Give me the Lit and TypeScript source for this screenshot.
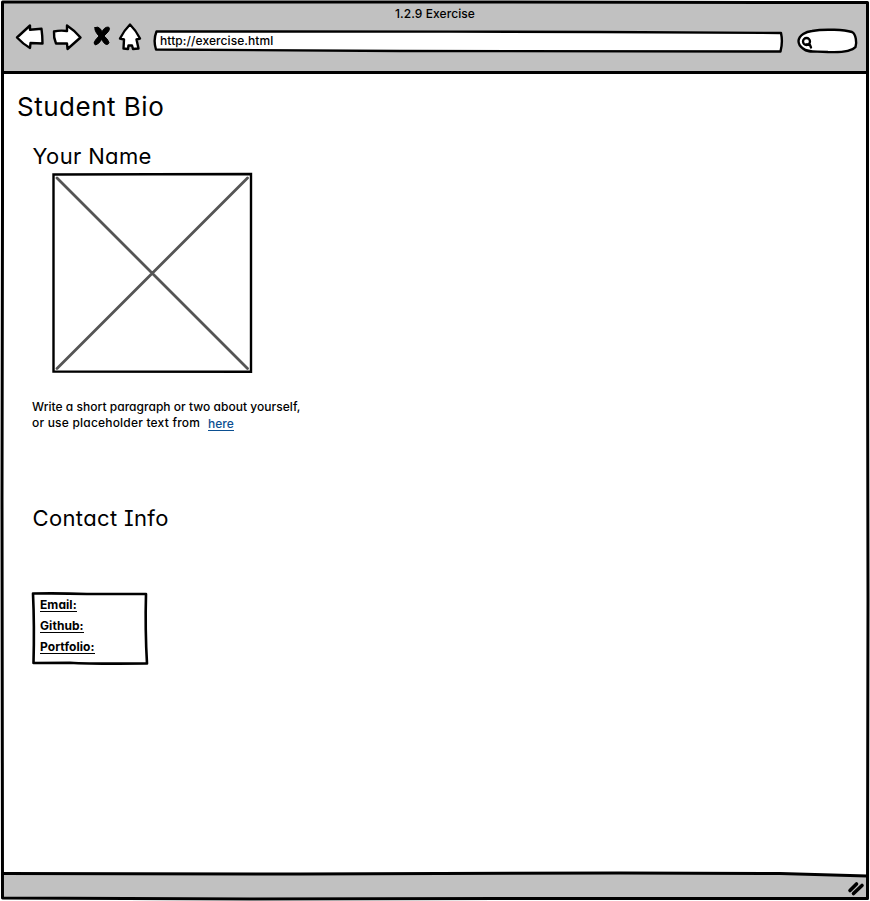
import { LitElement, html, css } from "lit";
import { customElement } from "lit/decorators.js";

@customElement("app-root")
export class AppRoot extends LitElement {
  static styles = css`
    :host {
      display: block;
      width: 870px;
      height: 901px;
      background: #fff;
      color: #000;
      font-family: Inter, Lato, sans-serif;
      font-feature-settings: "cv11";
      overflow: hidden;
    }
    * { box-sizing: border-box; }
    .window { position: relative; display: flex; flex-direction: column; height: 100%; }
    .outline { position: absolute; inset: 0; pointer-events: none; }
    .bar { height: 71px; margin: 2px 3px 0 3px; background: #c1c1c1; flex: none; }
    .title { margin: 0; padding: 4px 0 0 0; text-align: center; font-size: 12px; line-height: 15px; font-weight: 500; letter-spacing: 0.08px; }
    .tools { display: flex; padding-left: 12px; }
    .nav { display: block; width: 130px; height: 32px; }
    .field { position: relative; display: block; width: 630px; height: 24px; margin: 9px 0 0 8px; }
    .shape { position: absolute; inset: 0; }
    .url { position: relative; display: block; padding: 3px 0 0 7px; font-size: 12px; line-height: 15px; font-weight: 500; letter-spacing: 0.08px; }
    .search { display: block; width: 62px; height: 28px; margin: 6px 0 0 14px; }
    main { flex: 1; padding: 18px 0 0 17px; display: flex; flex-direction: column; align-items: flex-start; }
    h1 { margin: 0; font-size: 26px; line-height: 32px; font-weight: 400; letter-spacing: 0.5px; white-space: nowrap; }
    h2 { margin: 0; font-size: 22px; line-height: 28px; font-weight: 400; white-space: nowrap; }
    .name { padding-left: 0.5px; letter-spacing: 0.35px; }
    .info { padding-left: 0.5px; letter-spacing: 0.35px; font-feature-settings: "cv11", "cv08"; }
    section { padding-left: 15px; display: flex; flex-direction: column; align-items: flex-start; }
    .about { padding-top: 19px; }
    .photo { display: block; width: 200px; height: 200px; margin: 3px 0 0 20px; }
    .bio { margin: 26px 0 0; font-size: 12px; line-height: 16px; font-weight: 500; white-space: nowrap; }
    .line { display: flex; }
    .one { letter-spacing: 0.03px; }
    .two { letter-spacing: 0.2px; }
    .link { margin: 1px 0 0 8px; height: 15px; color: #0b4f91; border-bottom: 1px solid #0b4f91; letter-spacing: 0; }
    .contact { padding-top: 73px; }
    .card { position: relative; width: 116px; height: 73px; margin-top: 60px; }
    ul { position: relative; list-style: none; margin: 0; padding: 6px 0 0 8px; font-size: 12px; line-height: 14px; font-weight: 700; letter-spacing: 0.07px; }
    li { height: 21px; }
    .label { display: inline-block; height: 14px; border-bottom: 1px solid #000; }
    footer { height: 28px; margin: 0 3px 3px 3px; background: #c1c1c1; display: flex; justify-content: flex-end; clip-path: polygon(0 3px, 780px 3px, 100% 6px, 100% 100%, 0 100%); }
    .grip { width: 18px; height: 16px; margin: 11px 2px 0 0; }
    svg { overflow: visible; fill: none; stroke: #000; stroke-linecap: round; stroke-linejoin: round; }
  `;

  render() {
    return html`
      <div class="window">
        <header class="bar">
          <p class="title">1.2.9 Exercise</p>
          <div class="tools">
            <svg class="nav" viewBox="15 21 130 32" stroke-width="2.4">
              <g fill="#fff">
                <path d="M17 37.500 L30 25.500 L30 29.800 L41.500 28.800 Q42.500 36 42.500 43.500 L30.500 43 L30 48 Q23 44 17 37.500 Z" />
                <path d="M54 31.500 Q60 30 67 31 L67 25.500 Q74 30 80.500 37.500 L67.500 49 L67 43.500 L56 43.500 Q53.500 38 54 31.500 Z" />
                <path d="M130 24.500 Q136 30.500 140 38.500 L136.500 39.500 L138.500 48.500 L133 49 L132 45.500 L128.500 45.500 L128 49 L123.500 48.500 L124 39.500 L120 38.500 Q124 30.500 130 24.500 Z" />
              </g>
              <path fill="#000" stroke-width="1" d="M95 27.500 Q98 26 100.500 29 L102 32 Q104 27 108.500 27 Q111 29 107 33 L104 36 Q108 39 109 42.500 Q108 46 104.500 43.500 L101.500 39.500 Q99 44 95.500 45 Q92.500 43.500 95.500 40 L99 36 Q94 31 95 27.500 Z" />
            </svg>
            <div class="field">
              <svg class="shape" width="630" height="24" viewBox="153 30 630 24" stroke-width="2.4">
                <path fill="#fff" d="M156.500 31.500 C260 31.500 450 31.500 600 32 C670 32.500 730 33 781 33 Q783 42 780.500 51.500 L400 51 L156 49.500 Q153 40 156.500 31.500 Z" />
              </svg>
              <span class="url">http://exercise.html</span>
            </div>
            <svg class="search" viewBox="797 27 62 28" stroke-width="2.4">
              <path fill="#fff" d="M798.500 41 C799 35 806 31.500 812 31 C825 28.500 845 30 852 32 C856 34 857 43 855.500 47 C852 51 840 52.500 828 52 C815 51 808 53 803 48.500 C799.500 46 798.500 44 798.500 41 Z" />
              <circle cx="806.500" cy="41.500" r="3.500" stroke-width="2.300" />
              <path d="M806.500 44.500 L810 45 L811 47.500" stroke-width="2.300" />
            </svg>
          </div>
        </header>
        <main>
          <h1>Student Bio</h1>
          <section class="about">
            <h2 class="name">Your Name</h2>
            <svg class="photo" viewBox="52 173 200 200">
              <path d="M57 178 L247.500 368.500 M247.500 178 L57 368.500" stroke="#555" stroke-width="2.800" />
              <path d="M53.500 174.500 L251 174 L251 371.700 L53.500 371.500 Z" stroke-width="2.400" stroke-linejoin="miter" />
            </svg>
            <div class="bio">
              <div class="line one">Write a short paragraph or two about yourself,</div>
              <div class="line two">or use placeholder text from<span class="link">here</span></div>
            </div>
          </section>
          <section class="contact">
            <h2 class="info">Contact Info</h2>
            <div class="card">
              <svg class="shape" width="116" height="73" viewBox="32 592 116 73" stroke-width="2.600">
                <path d="M33 593.500 Q60 593 87 594 L146 594 Q145 630 147 663.500 Q90 664 70 662.700 L33.500 663 Q34.500 626 33 593.500 Z" />
              </svg>
              <ul>
                <li><span class="label">Email:</span></li>
                <li><span class="label">Github:</span></li>
                <li><span class="label">Portfolio:</span></li>
              </ul>
            </div>
          </section>
        </main>
        <footer>
          <svg class="grip" viewBox="847 881 18 16" stroke-width="3.600">
            <path d="M850 890.500 L856.500 884 M853.500 893.500 L862 885.500" />
          </svg>
        </footer>
        <svg class="outline" width="870" height="901" viewBox="0 0 870 901" stroke-width="3">
          <path d="M2.500 2 L400 2 L867.500 2.500 L867.500 300 L868 600 L867.500 898.500 L500 898.500 L250 899 L2.500 898 L2 500 L2.500 200 Z" />
          <path d="M3 72.500 L867 72.500 M3 873.500 L300 874 L620 873 L780 873.500 L867 876" />
        </svg>
      </div>
    `;
  }
}
